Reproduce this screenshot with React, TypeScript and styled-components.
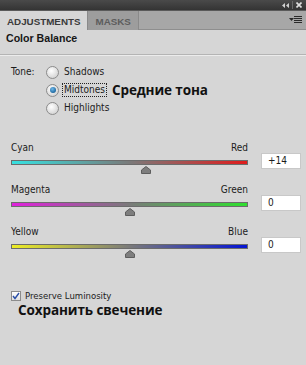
import React from 'react';
import styled, { createGlobalStyle } from 'styled-components';

const GlobalStyle = createGlobalStyle`
  html, body {
    margin: 0;
    padding: 0;
    background: #d6d6d6;
  }
`;

const uiFont = `"DejaVu Sans Condensed", "DejaVu Sans", sans-serif`;
const ruFont = `"Open Sans", "Noto Sans", sans-serif`;

interface SliderProps {
  left: string;
  right: string;
  from: string;
  to: string;
  value: number;
}

const sliders: SliderProps[] = [
  { left: 'Cyan', right: 'Red', from: '#36e0e0', to: '#e01c1c', value: 14 },
  { left: 'Magenta', right: 'Green', from: '#e020dc', to: '#2ee02e', value: 0 },
  { left: 'Yellow', right: 'Blue', from: '#ecec24', to: '#0414d4', value: 0 },
];

const tones = ['Shadows', 'Midtones', 'Highlights'];

const Panel = styled.div`
  width: 306px;
  height: 365px;
  background: #d6d6d6;
  font-family: ${uiFont};
  color: #1c1c1c;
  display: flex;
  flex-direction: column;
  overflow: hidden;
`;

const TitleBar = styled.div`
  height: 10px;
  background: linear-gradient(#4a4a4a, #343434);
  display: flex;
  justify-content: flex-end;
  align-items: center;
  gap: 3px;
  padding-right: 4px;
  > span {
    width: 1px;
    height: 8px;
    background: #6a6a6a;
  }
`;

const TabBar = styled.div`
  height: 20px;
  background: #a7a7a7;
  border-top: 1px solid #5a5a5a;
  display: flex;
  align-items: stretch;
  box-sizing: border-box;
`;

const Tab = styled.div<{ $active?: boolean }>`
  padding: 1px 7px 0;
  display: flex;
  align-items: center;
  font-size: 9.8px;
  font-weight: bold;
  font-family: "Liberation Sans", Arial, sans-serif;
  color: ${(p) => (p.$active ? '#3a3a3a' : '#5c5c5c')};
  background: ${(p) => (p.$active ? '#d6d6d6' : '#9d9d9d')};
  border-right: 1px solid #8a8a8a;
`;

const TabSpacer = styled.div`
  flex: 1;
  display: flex;
  justify-content: flex-end;
  align-items: center;
  padding-right: 4px;
  border-bottom: 1px solid #8e8e8e;
`;

const Header = styled.div`
  height: 25px;
  padding: 2px 0 0 6px;
  box-sizing: border-box;
  font-family: "Liberation Sans", Arial, sans-serif;
  font-size: 10.6px;
  font-weight: bold;
  color: #161616;
  border-bottom: 1px solid #b4b4b4;
  box-shadow: 0 1px 0 #ececec;
`;

const ToneBlock = styled.div`
  display: flex;
  padding: 9px 0 0 11px;
`;

const ToneLabel = styled.div`
  width: 35px;
  font-size: 10px;
  line-height: 16px;
`;

const ToneList = styled.div`
  display: flex;
  flex-direction: column;
  gap: 2px;
`;

const ToneRow = styled.div`
  display: flex;
  align-items: center;
  height: 16px;
  gap: 3px;
`;

const Radio = styled.span<{ $checked?: boolean }>`
  width: 11px;
  height: 11px;
  border-radius: 50%;
  border: 1px solid #8c8c8c;
  background: radial-gradient(circle at 40% 35%, #ffffff, #d8d8d8 70%);
  display: flex;
  align-items: center;
  justify-content: center;
  &::after {
    content: '';
    display: ${(p) => (p.$checked ? 'block' : 'none')};
    width: 6px;
    height: 6px;
    border-radius: 50%;
    background: radial-gradient(circle at 40% 35%, #6fb8ea, #145f96 80%);
  }
`;

const ToneText = styled.span<{ $focus?: boolean }>`
  font-size: 10px;
  padding: 0 1px;
  border: 1px dotted ${(p) => (p.$focus ? '#222' : 'transparent')};
  line-height: 12px;
`;

const Note = styled.span`
  font-family: ${ruFont};
  font-weight: 700;
  font-size: 13.5px;
  color: #111;
  letter-spacing: -0.1px;
`;

const ToneNote = styled(Note)`
  margin-left: 2px;
`;

const Sliders = styled.div`
  margin-top: 26px;
  padding: 0 4px 0 11px;
  display: flex;
  flex-direction: column;
  gap: 12px;
`;

const SliderRow = styled.div`
  display: grid;
  grid-template-columns: 237px 40px;
  column-gap: 13px;
`;

const SliderLabels = styled.div`
  display: flex;
  justify-content: space-between;
  font-size: 10px;
  line-height: 12px;
`;

const Track = styled.div<{ $from: string; $to: string }>`
  position: relative;
  margin-top: 6px;
  height: 5px;
  border: 1px solid #6c6c6c;
  box-sizing: border-box;
  background: linear-gradient(to right, ${(p) => p.$from}, #7a7a7a 50%, ${(p) => p.$to});
`;

const Thumb = styled.svg`
  position: absolute;
  top: 5px;
  width: 10px;
  height: 8px;
  margin-left: -5px;
`;

const ThumbSpace = styled.div`
  height: 7px;
`;

const ValueBox = styled.div`
  margin-top: 11px;
  height: 16px;
  background: #fff;
  border: 1px solid #c8c8c8;
  box-sizing: border-box;
  font-size: 10px;
  line-height: 14px;
  padding-left: 6px;
`;

const Preserve = styled.div`
  margin-top: 34px;
  padding-left: 11px;
  display: flex;
  align-items: center;
  gap: 4px;
  font-size: 9.5px;
`;

const Check = styled.span`
  width: 10px;
  height: 10px;
  border: 1px solid #8c8c8c;
  background: linear-gradient(#ffffff, #e0e0e0);
  box-sizing: border-box;
  display: flex;
  align-items: center;
  justify-content: center;
`;

const NoteLine = styled.div`
  padding-left: 18px;
  margin-top: 0;
  line-height: 17px;
`;

const Slider: React.FC<SliderProps> = ({ left, right, from, to, value }) => (
  <SliderRow>
    <div>
      <SliderLabels>
        <span>{left}</span>
        <span>{right}</span>
      </SliderLabels>
      <Track $from={from} $to={to}>
        <Thumb viewBox="0 0 10 8" style={{ left: `${50 + value / 2}%` }}>
          <path d="M5 0.5 L9.5 4 V7.5 H0.5 V4 Z" fill="#7e7e7e" stroke="#5e5e5e" strokeWidth="1" />
        </Thumb>
      </Track>
      <ThumbSpace />
    </div>
    <ValueBox>{value > 0 ? `+${value}` : value}</ValueBox>
  </SliderRow>
);

export default function App() {
  return (
    <>
      <GlobalStyle />
      <Panel>
        <TitleBar>
          <svg width="7" height="5" viewBox="0 0 7 5">
            <path d="M3 0 L0 2.5 L3 5 Z M7 0 L4 2.5 L7 5 Z" fill="#d0d0d0" />
          </svg>
          <span />
          <svg width="6" height="6" viewBox="0 0 6 6">
            <path d="M0.5 0.5 L5.5 5.5 M5.5 0.5 L0.5 5.5" stroke="#e0e0e0" strokeWidth="1.6" />
          </svg>
        </TitleBar>
        <TabBar>
          <Tab $active>ADJUSTMENTS</Tab>
          <Tab>MASKS</Tab>
          <TabSpacer>
            <svg width="13" height="8" viewBox="0 0 13 8">
              <path d="M0 2 H5 L2.5 5 Z" fill="#2a2a2a" />
              <path d="M5 0.5 H13 M5 2.5 H13 M5 4.5 H13 M5 6.5 H13" stroke="#2a2a2a" strokeWidth="1" />
            </svg>
          </TabSpacer>
        </TabBar>
        <Header>Color Balance</Header>
        <ToneBlock>
          <ToneLabel>Tone:</ToneLabel>
          <ToneList>
            {tones.map((t) => (
              <ToneRow key={t}>
                <Radio $checked={t === 'Midtones'} />
                <ToneText $focus={t === 'Midtones'}>{t}</ToneText>
                {t === 'Midtones' && <ToneNote>Средние тона</ToneNote>}
              </ToneRow>
            ))}
          </ToneList>
        </ToneBlock>
        <Sliders>
          {sliders.map((s) => (
            <Slider key={s.left} {...s} />
          ))}
        </Sliders>
        <Preserve>
          <Check>
            <svg width="8" height="8" viewBox="0 0 8 8">
              <path d="M1 4 L3 6.5 L7 1" stroke="#2a4fa8" strokeWidth="1.4" fill="none" />
            </svg>
          </Check>
          Preserve Luminosity
        </Preserve>
        <NoteLine>
          <Note>Сохранить свечение</Note>
        </NoteLine>
      </Panel>
    </>
  );
}
